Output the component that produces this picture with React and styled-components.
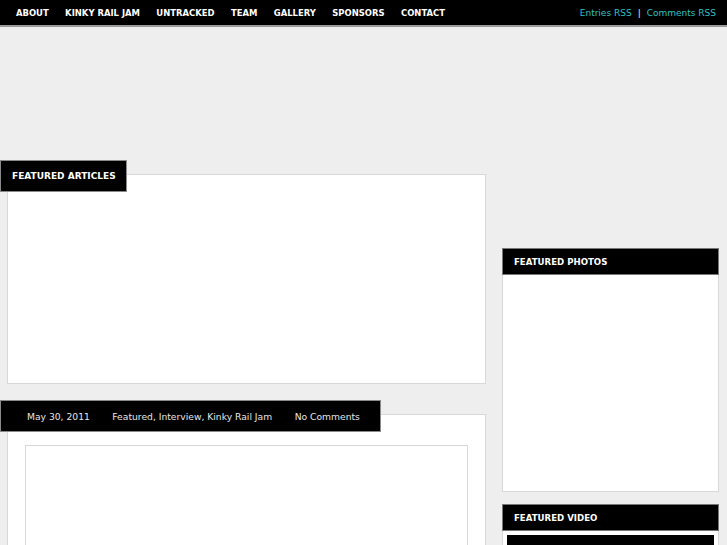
import React from "react";
import styled, { createGlobalStyle } from "styled-components";

const Global = createGlobalStyle`
  html, body { margin: 0; padding: 0; background: #eeeeee; }
  body { font-family: "DejaVu Sans", Verdana, sans-serif; overflow: hidden; }
  * { box-sizing: border-box; }
`;

const NavBar = styled.div`
  height: 27px;
  background: #000;
  border-bottom: 2px solid #9a9a9a;
  display: flex;
  align-items: center;
  justify-content: space-between;
  padding: 1px 11px 0 7.8px;
`;

const NavList = styled.div`
  display: flex;
  align-items: center;
`;

const NavItem = styled.a`
  color: #fff;
  font-weight: bold;
  font-size: 8.45px;
  padding: 0 8.2px;
  text-decoration: none;
`;

const Rss = styled.div`
  display: flex;
  align-items: center;
  font-size: 9px;
  color: #e8e8e8;
  gap: 6px;
`;

const RssLink = styled.a`
  color: #33c0c0;
  text-decoration: none;
`;

const Page = styled.div`
  display: flex;
  gap: 16px;
  padding-left: 7px;
`;

const Main = styled.div`
  width: 479px;
  padding-top: 147px;
  display: flex;
  flex-direction: column;
  gap: 30px;
`;

const Panel = styled.div`
  position: relative;
  background: #fff;
  border: 1px solid #d8d8d8;
  height: ${(p) => p.$h || "auto"};
  padding: ${(p) => p.$pad || "0"};
`;

const Tab = styled.div`
  position: absolute;
  top: -15px;
  left: -8px;
  height: 32px;
  width: ${(p) => p.$w};
  background: #000;
  border: 1px solid #8a8a8a;
  display: flex;
  align-items: center;
  color: #fff;
  font-size: ${(p) => (p.$bold ? "9px" : "9.2px")};
  font-weight: ${(p) => (p.$bold ? "bold" : "normal")};
  padding-left: ${(p) => p.$pl || "11px"};
  gap: 22.5px;
  white-space: nowrap;
`;

const MetaText = styled.span`
  color: #e6e6e6;
`;

const InnerBox = styled.div`
  border: 1px solid #d8d8d8;
  height: 140px;
`;

const Sidebar = styled.div`
  width: 217px;
  padding-top: 221px;
  display: flex;
  flex-direction: column;
`;

const SideHeader = styled.div`
  height: 27px;
  background: #000;
  border: 1px solid #777;
  color: #fff;
  font-weight: bold;
  font-size: 8.6px;
  display: flex;
  align-items: center;
  padding-left: 11px;
  margin-top: ${(p) => p.$mt || "0"};
`;

const SidePanel = styled.div`
  background: #fff;
  border: 1px solid #d8d8d8;
  border-top: none;
  height: ${(p) => p.$h};
  padding: 4px 4px 0 4px;
`;

const VideoBox = styled.div`
  background: #000;
  height: 40px;
`;

export default function App() {
  const nav = ["ABOUT", "KINKY RAIL JAM", "UNTRACKED", "TEAM", "GALLERY", "SPONSORS", "CONTACT"];
  return (
    <>
      <Global />
      <NavBar>
        <NavList>
          {nav.map((n) => (
            <NavItem key={n}>{n}</NavItem>
          ))}
        </NavList>
        <Rss>
          <RssLink>Entries RSS</RssLink>
          <span>|</span>
          <RssLink>Comments RSS</RssLink>
        </Rss>
      </NavBar>
      <Page>
        <Main>
          <Panel $h="210px">
            <Tab $w="127px" $bold $pl="11px">FEATURED ARTICLES</Tab>
          </Panel>
          <Panel $pad="30px 17px 0 17px">
            <Tab $w="381px" $pl="26px">
              <MetaText>May 30, 2011</MetaText>
              <MetaText>Featured, Interview, Kinky Rail Jam</MetaText>
              <MetaText>No Comments</MetaText>
            </Tab>
            <InnerBox />
          </Panel>
        </Main>
        <Sidebar>
          <SideHeader>FEATURED PHOTOS</SideHeader>
          <SidePanel $h="217px" />
          <SideHeader $mt="12px">FEATURED VIDEO</SideHeader>
          <SidePanel $h="60px">
            <VideoBox />
          </SidePanel>
        </Sidebar>
      </Page>
    </>
  );
}
